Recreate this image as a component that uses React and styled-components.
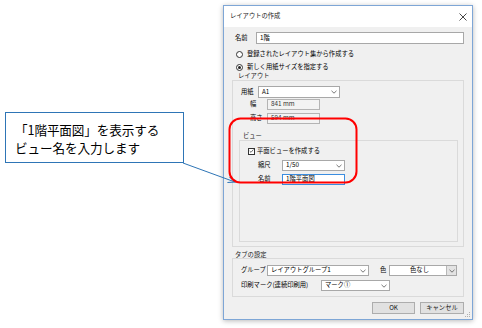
import React from "react";
import styled, { createGlobalStyle } from "styled-components";

const GlobalStyle = createGlobalStyle`
  html, body { margin: 0; padding: 0; background: #fff; }
  body { font-family: "Noto Sans CJK JP", "Noto Sans", sans-serif; color: #000; }
  * { box-sizing: border-box; }
`;

const Stage = styled.div`
  position: relative;
  width: 482px;
  height: 328px;
  display: flex;
  align-items: flex-start;
  overflow: hidden;
`;

const Callout = styled.div`
  margin: 112px 0 0 5px;
  width: 179px;
  height: 51px;
  border: 1px solid #2e75b6;
  padding: 8px 0 0 9px;
  font-size: 12.6px;
  line-height: 18px;
  white-space: nowrap;
  background: #fff;
  letter-spacing: -0.1px;
`;

const Dialog = styled.div`
  position: relative;
  margin: 5px 0 0 39px;
  width: 250px;
  height: 315px;
  border: 1px solid #7ea6d6;
  background: #f0f0f0;
  box-shadow: 0 1px 5px rgba(0, 0, 0, 0.28);
  display: flex;
  flex-direction: column;
  font-size: 6.3px;
  line-height: 1;
`;

const TitleBar = styled.div`
  height: 21px;
  background: #fff;
  display: flex;
  align-items: center;
  justify-content: space-between;
  padding: 0 5px 0 6px;
`;

const Title = styled.span`
  color: #222;
`;

const Body = styled.div`
  display: flex;
  flex-direction: column;
  padding: 0 8px;
`;

const Row = styled.div`
  display: flex;
  align-items: center;
  height: ${(p) => p.$h || 12}px;
  margin-top: ${(p) => p.$mt || 0}px;
  padding-left: ${(p) => p.$pl || 0}px;
  gap: ${(p) => p.$gap || 0}px;
`;

const Label = styled.span`
  flex: none;
  width: ${(p) => (p.$w ? `${p.$w}px` : "auto")};
  padding-left: ${(p) => p.$pl || 0}px;
  white-space: nowrap;
  color: #000;
`;

const Field = styled.div`
  flex: ${(p) => (p.$w ? "none" : "1")};
  width: ${(p) => (p.$w ? `${p.$w}px` : "auto")};
  height: 100%;
  border: 1px solid ${(p) => (p.$focus ? "#3b8de0" : p.$ro ? "#b4b4b4" : "#a8a8a8")};
  background: ${(p) => (p.$ro ? "#f3f3f3" : "#fff")};
  display: flex;
  align-items: center;
  padding-left: 3px;
  color: ${(p) => (p.$ro ? "#333" : "#000")};
  white-space: nowrap;
  overflow: hidden;
`;

const Combo = styled.div`
  flex: none;
  width: ${(p) => p.$w}px;
  height: 100%;
  border: 1px solid #a8a8a8;
  background: #fff;
  display: flex;
  align-items: center;
  padding-left: 3px;
  white-space: nowrap;
`;

const ComboText = styled.span`
  flex: 1;
  text-align: ${(p) => (p.$center ? "center" : "left")};
`;

const ComboArrow = styled.span`
  flex: none;
  width: 10px;
  height: 100%;
  display: flex;
  align-items: center;
  justify-content: center;
  background: ${(p) => (p.$btn ? "#e3e3e3" : "transparent")};
  border-left: ${(p) => (p.$btn ? "1px solid #b8b8b8" : "none")};
`;

const RadioDot = styled.span`
  flex: none;
  width: 7px;
  height: 7px;
  border-radius: 50%;
  border: 1px solid #333;
  background: #fff;
  display: flex;
  align-items: center;
  justify-content: center;
  &::after {
    content: "";
    width: 3px;
    height: 3px;
    border-radius: 50%;
    background: ${(p) => (p.$on ? "#222" : "transparent")};
  }
`;

const CheckBox = styled.span`
  flex: none;
  width: 7px;
  height: 7px;
  border: 1px solid #333;
  background: #fff;
  display: flex;
  align-items: center;
  justify-content: center;
`;

const GroupLabel = styled.div`
  height: ${(p) => p.$h || 7}px;
  margin-top: ${(p) => p.$mt || 0}px;
  margin-bottom: ${(p) => p.$mb || 0}px;
  padding-left: ${(p) => p.$pl || 0}px;
  display: flex;
  align-items: center;
  color: #222;
  white-space: nowrap;
`;

const GroupBox = styled.div`
  border: 1px solid #dadada;
  height: ${(p) => (p.$h ? `${p.$h}px` : "auto")};
  margin: ${(p) => p.$m || "0"};
  padding: ${(p) => p.$p || "0"};
  display: flex;
  flex-direction: column;
`;

const ButtonBar = styled.div`
  display: flex;
  justify-content: flex-end;
  gap: 5px;
  margin-top: 5px;
  height: 12px;
`;

const Button = styled.div`
  width: ${(p) => p.$w}px;
  height: 12px;
  border: 1px solid #adadad;
  background: #e1e1e1;
  display: flex;
  align-items: center;
  justify-content: center;
  color: #111;
`;

const Grip = styled.svg`
  position: absolute;
  right: 1px;
  bottom: 1px;
`;

const Overlay = styled.svg`
  position: absolute;
  left: 0;
  top: 0;
  pointer-events: none;
`;

const Chevron = () => (
  <svg width="6" height="4" viewBox="0 0 6 4">
    <path d="M0.5 0.8 L3 3.2 L5.5 0.8" fill="none" stroke="#555" strokeWidth="0.8" />
  </svg>
);

const Select = ({ w, children, center, btn }) => (
  <Combo $w={w}>
    <ComboText $center={center}>{children}</ComboText>
    <ComboArrow $btn={btn}>
      <Chevron />
    </ComboArrow>
  </Combo>
);

export default function App() {
  return (
    <>
      <GlobalStyle />
      <Stage>
        <Callout>
          「1階平面図」を表示する
          <br />
          ビュー名を入力します
        </Callout>

        <Dialog>
          <TitleBar>
            <Title>レイアウトの作成</Title>
            <svg width="8" height="8" viewBox="0 0 8 8">
              <path d="M0.5 0.5 L7.5 7.5 M7.5 0.5 L0.5 7.5" stroke="#333" strokeWidth="0.9" />
            </svg>
          </TitleBar>

          <Body>
            <Row $h={12} $mt={5} $pl={3}>
              <Label $w={21}>名前</Label>
              <Field>1階</Field>
            </Row>
            <Row $h={12} $mt={4} $pl={4} $gap={4}>
              <RadioDot />
              <Label>登録されたレイアウト集から作成する</Label>
            </Row>
            <Row $h={12} $mt={1} $pl={4} $gap={4}>
              <RadioDot $on />
              <Label>新しく用紙サイズを指定する</Label>
            </Row>

            <GroupLabel $h={7} $pl={6}>レイアウト</GroupLabel>
            <GroupBox $h={167} $p="5px 5px 0 0">
              <Row $h={12} $pl={8}>
                <Label $w={17}>用紙</Label>
                <Select w={82}>A1</Select>
              </Row>
              <Row $h={11} $mt={1} $pl={17}>
                <Label $w={17}>幅</Label>
                <Field $w={53} $ro>841 mm</Field>
              </Row>
              <Row $h={11} $mt={3} $pl={17}>
                <Label $w={17}>高さ</Label>
                <Field $w={53} $ro>594 mm</Field>
              </Row>

              <GroupLabel $h={7} $mt={9} $pl={10}>ビュー</GroupLabel>
              <GroupBox $h={102} $m="0 0 0 6px" $p="6px 0 0 0">
                <Row $h={8} $pl={8} $gap={2}>
                  <CheckBox>
                    <svg width="6" height="6" viewBox="0 0 6 6">
                      <path d="M0.8 3 L2.4 4.6 L5.3 1.2" fill="none" stroke="#222" strokeWidth="0.8" />
                    </svg>
                  </CheckBox>
                  <Label>平面ビューを作成する</Label>
                </Row>
                <Row $h={11} $mt={5} $pl={18}>
                  <Label $w={24}>縮尺</Label>
                  <Select w={63}>1/50</Select>
                </Row>
                <Row $h={11} $mt={3} $pl={18}>
                  <Label $w={24}>名前</Label>
                  <Field $w={63} $focus>1階平面図</Field>
                </Row>
              </GroupBox>
            </GroupBox>

            <GroupLabel $h={8} $mt={4} $mb={-1} $pl={3}>タブの設定</GroupLabel>
            <GroupBox $p="6px 0 5px 8px">
              <Row $h={11}>
                <Label $w={26}>グループ</Label>
                <Select w={102}>レイアウトグループ1</Select>
                <Label $w={20} $pl={11}>色</Label>
                <Select w={68} center btn>色なし</Select>
              </Row>
              <Row $h={11} $mt={4}>
                <Label $w={80}>印刷マーク(連続印刷用)</Label>
                <Select w={69}>マーク①</Select>
              </Row>
            </GroupBox>

            <ButtonBar>
              <Button $w={43}>OK</Button>
              <Button $w={44}>キャンセル</Button>
            </ButtonBar>
          </Body>

          <Grip width="6" height="6" viewBox="0 0 6 6">
            <g fill="#b0b0b0">
              <rect x="4" y="0" width="1" height="1" />
              <rect x="2" y="2" width="1" height="1" />
              <rect x="4" y="2" width="1" height="1" />
              <rect x="0" y="4" width="1" height="1" />
              <rect x="2" y="4" width="1" height="1" />
              <rect x="4" y="4" width="1" height="1" />
            </g>
          </Grip>
        </Dialog>

        <Overlay width="482" height="328" viewBox="0 0 482 328">
          <defs>
            <marker id="arr" markerWidth="8" markerHeight="8" refX="7" refY="4" orient="auto" markerUnits="userSpaceOnUse">
              <path d="M0 1 L7 4 L0 7" fill="none" stroke="#2e75b6" strokeWidth="1" />
            </marker>
          </defs>
          <line x1="183" y1="163" x2="235" y2="182" stroke="#2e75b6" strokeWidth="1" markerEnd="url(#arr)" />
          <rect x="229.5" y="118.5" width="127" height="64" rx="11" ry="11" fill="none" stroke="#ff0000" strokeWidth="2" />
        </Overlay>
      </Stage>
    </>
  );
}
